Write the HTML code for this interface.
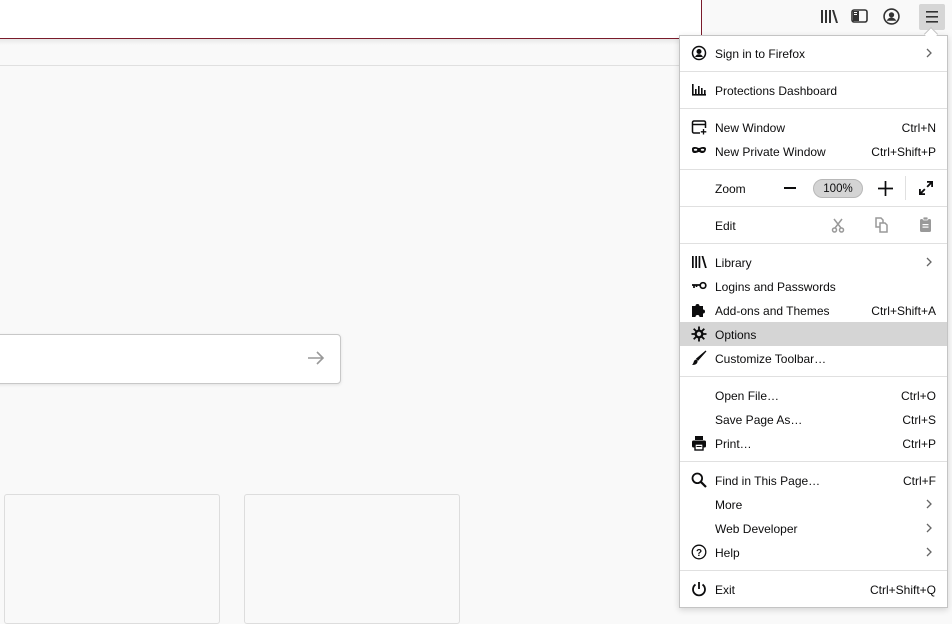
<!DOCTYPE html>
<html><head><meta charset="utf-8"><style>
*{margin:0;padding:0;box-sizing:border-box}
body{width:952px;height:612px;overflow:hidden;background:#f9f9f9;position:relative;font-family:"Liberation Sans",sans-serif;font-size:12px;color:#0c0c0d}
.abs{position:absolute}
.row{position:absolute;left:680px;width:267px;height:24px;line-height:24px}
.row .t{position:absolute;left:35px;top:1px}
.row .k{position:absolute;right:11px;top:1px}
.row .ic{position:absolute;left:11px;top:4px;width:16px;height:16px}
.row .ch{position:absolute;right:13px;top:7px;width:10px;height:10px}
.sep{position:absolute;left:680px;width:267px;height:1px;background:#e0e0e0}
</style></head><body>
<div class="abs" style="left:0;top:0;width:702px;height:39px;background:#fff;border-right:1px solid #7a1b2b;border-bottom:1px solid #7a1b2b"></div>
<div class="abs" style="left:702px;top:0;width:250px;height:39px;background:#f9f9f9"></div>
<div class="abs" style="left:0;top:39px;width:680px;height:6px;background:linear-gradient(#e8e8e8,#f9f9f9)"></div>
<div class="abs" style="left:0;top:65px;width:680px;height:1px;background:#e0e0e0"></div>
<svg class="abs" style="left:820px;top:9px" width="18" height="16" viewBox="0 0 18 16"><g fill="#333"><rect x="1" y="1" width="2" height="13"/><rect x="5" y="1" width="2" height="13"/><rect x="9" y="1" width="2" height="13"/><path d="M12 1h2l4 13h-2z"/></g></svg>
<svg class="abs" style="left:851px;top:9px" width="17" height="15" viewBox="0 0 17 15"><rect x="1" y="1" width="15" height="12" rx="2" fill="none" stroke="#333" stroke-width="1.6"/><rect x="2" y="2" width="6" height="10" fill="#333"/><rect x="3" y="3" width="3" height="1" fill="#fff"/><rect x="3" y="5" width="3" height="1" fill="#fff"/></svg>
<svg class="abs" style="left:883px;top:8px" width="17" height="17" viewBox="0 0 16 16"><circle cx="8" cy="8" r="7" fill="none" stroke="#333" stroke-width="1.5"/><circle cx="8" cy="6.5" r="2.5" fill="#333"/><path d="M3.5 12c1-2 2.5-3 4.5-3s3.5 1 4.5 3z" fill="#333"/></svg>
<div class="abs" style="left:919px;top:4px;width:26px;height:26px;background:#d6d6d6;border-radius:2px"></div>
<svg class="abs" style="left:925px;top:10px" width="14" height="14" viewBox="0 0 14 14"><g fill="#333"><rect x="1" y="1" width="12" height="1.6"/><rect x="1" y="6" width="12" height="1.6"/><rect x="1" y="11" width="12" height="1.6"/></g></svg>
<div class="abs" style="left:-6px;top:334px;width:347px;height:50px;background:#fff;border:1px solid #c8c8c8;border-radius:4px;box-shadow:0 1px 3px rgba(0,0,0,.1)"></div>
<svg class="abs" style="left:307px;top:350px" width="18" height="16" viewBox="0 0 18 16"><path d="M1 8h15M10 2l6 6-6 6" fill="none" stroke="#999" stroke-width="1.6"/></svg>
<div class="abs" style="left:4px;top:494px;width:216px;height:130px;border:1px solid #ddd;border-radius:3px"></div>
<div class="abs" style="left:244px;top:494px;width:216px;height:130px;border:1px solid #ddd;border-radius:3px"></div>
<div class="abs" style="left:679px;top:35px;width:269px;height:573px;background:#fff;border:1px solid #c4c4c4;box-shadow:0 2px 6px rgba(0,0,0,.15)"></div>
<div class="abs" style="left:926px;top:29px;width:10px;height:10px;background:#fff;border-left:1px solid #c4c4c4;border-top:1px solid #c4c4c4;transform:rotate(45deg)"></div>

<div class="row" style="top:41px"><svg class="ic" viewBox="0 0 16 16"><circle cx="8" cy="8" r="6.5" fill="none" stroke="#0c0c0d" stroke-width="1.5"/><circle cx="8" cy="6.5" r="2.5" fill="#0c0c0d"/><path d="M4 12c1-2 2.3-2.8 4-2.8s3 .8 4 2.8z" fill="#0c0c0d"/></svg><span class="t">Sign in to Firefox</span><svg class="ch" viewBox="0 0 10 10"><path d="M3 1l4 4-4 4" fill="none" stroke="#666" stroke-width="1.3"/></svg></div>
<div class="sep" style="top:71px"></div>
<div class="row" style="top:78px"><svg class="ic" viewBox="0 0 16 16"><g fill="#0c0c0d"><rect x="1" y="2" width="1.6" height="11"/><rect x="1" y="12" width="14" height="1.6"/><rect x="4" y="7" width="1.6" height="5"/><rect x="7" y="4" width="1.6" height="8"/><rect x="10" y="6" width="1.6" height="6"/><rect x="13" y="8" width="1.6" height="4"/></g></svg><span class="t">Protections Dashboard</span></div>
<div class="sep" style="top:108px"></div>
<div class="row" style="top:115px"><svg class="ic" viewBox="0 0 16 16"><path d="M9 14H3a1.5 1.5 0 0 1-1.5-1.5v-9A1.5 1.5 0 0 1 3 2h10a1.5 1.5 0 0 1 1.5 1.5V9M1.5 5.5h13" fill="none" stroke="#0c0c0d" stroke-width="1.5"/><path d="M12.5 10v5.5M9.8 12.8h5.5" stroke="#0c0c0d" stroke-width="1.3"/></svg><span class="t">New Window</span><span class="k">Ctrl+N</span></div>
<div class="row" style="top:139px"><svg class="ic" viewBox="0 0 16 16"><path d="M1 6c0-1.5 1-2 3-2s3 1 4 1 2-1 4-1 3 .5 3 2-1 4-3.5 4S9 9 8 9s-2 1-4.5 1S1 7.5 1 6z" fill="#0c0c0d"/><ellipse cx="4.5" cy="6.8" rx="1.7" ry="1" fill="#fff"/><ellipse cx="11.5" cy="6.8" rx="1.7" ry="1" fill="#fff"/></svg><span class="t">New Private Window</span><span class="k">Ctrl+Shift+P</span></div>
<div class="sep" style="top:169px"></div>
<div class="row" style="top:176px"><span class="t">Zoom</span></div>
<div class="abs" style="left:784px;top:187px;width:12px;height:1.6px;background:#0c0c0d"></div>
<div class="abs" style="left:813px;top:179px;width:50px;height:19px;background:#d4d4d4;border:1px solid #b8b8b8;border-radius:10px;text-align:center;line-height:18px;font-size:11.5px">100%</div>
<svg class="abs" style="left:878px;top:181px" width="15" height="15" viewBox="0 0 15 15"><path d="M7.5 0v15M0 7.5h15" stroke="#0c0c0d" stroke-width="1.7"/></svg>
<div class="abs" style="left:905px;top:176px;width:1px;height:24px;background:#e0e0e0"></div>
<svg class="abs" style="left:918px;top:180px" width="16" height="16" viewBox="0 0 16 16"><path d="M9 1h6v6h-1.8V4.1L9.8 7.5 8.5 6.2l3.4-3.4H9zM7 15H1V9h1.8v2.9l3.4-3.4 1.3 1.3-3.4 3.4H7z" fill="#0c0c0d"/></svg>
<div class="sep" style="top:206px"></div>
<div class="row" style="top:213px"><span class="t">Edit</span></div>
<svg class="abs" style="left:831px;top:218px" width="14" height="15" viewBox="0 0 14 15"><path d="M3 1l7 9M11 1L4 10" stroke="#999" stroke-width="1.5"/><circle cx="3.5" cy="12" r="2" fill="none" stroke="#999" stroke-width="1.5"/><circle cx="10.5" cy="12" r="2" fill="none" stroke="#999" stroke-width="1.5"/></svg>
<svg class="abs" style="left:874px;top:217px" width="15" height="16" viewBox="0 0 15 16"><path d="M2 1h5l2 2v7H2z" fill="none" stroke="#999" stroke-width="1.5"/><path d="M6 6h5l2 2v7H6z" fill="#fff" stroke="#999" stroke-width="1.5"/></svg>
<svg class="abs" style="left:919px;top:216px" width="13" height="17" viewBox="0 0 13 17"><rect x="1" y="3" width="11" height="13" rx="1.5" fill="#999"/><rect x="4" y="1" width="5" height="3" rx="1" fill="#999" stroke="#fff" stroke-width=".8"/><rect x="3.5" y="8" width="6" height="1.2" fill="#fff"/><rect x="3.5" y="10.5" width="6" height="1.2" fill="#fff"/></svg>
<div class="sep" style="top:243px"></div>
<div class="row" style="top:250px"><svg class="ic" viewBox="0 0 16 16"><g fill="#0c0c0d"><rect x="1" y="2" width="1.7" height="12"/><rect x="4.3" y="2" width="1.7" height="12"/><rect x="7.6" y="2" width="1.7" height="12"/><path d="M10.5 2h1.8l3.5 12H14z"/></g></svg><span class="t">Library</span><svg class="ch" viewBox="0 0 10 10"><path d="M3 1l4 4-4 4" fill="none" stroke="#666" stroke-width="1.3"/></svg></div>
<div class="row" style="top:274px"><svg class="ic" viewBox="0 0 16 16"><path d="M1 7h8M3 7v3M5.5 7v2" stroke="#0c0c0d" stroke-width="1.7"/><circle cx="12" cy="7.5" r="2.8" fill="none" stroke="#0c0c0d" stroke-width="1.7"/></svg><span class="t">Logins and Passwords</span></div>
<div class="row" style="top:298px"><svg class="ic" viewBox="0 0 16 16"><path d="M1 5h3.5a2 2 0 1 1 4 0H12v3.5a2 2 0 1 1 0 4V16H8.5a2 2 0 1 0-4 0H1z" fill="#0c0c0d" transform="translate(0,-1)"/></svg><span class="t">Add-ons and Themes</span><span class="k">Ctrl+Shift+A</span></div>
<div class="row" style="top:322px;background:#d5d5d5;left:680px"><svg class="ic" viewBox="0 0 16 16"><g stroke="#0c0c0d" stroke-width="1.8"><path d="M8 0.5v15M0.5 8h15M2.7 2.7l10.6 10.6M13.3 2.7L2.7 13.3"/></g><circle cx="8" cy="8" r="4.5" fill="#0c0c0d"/><circle cx="8" cy="8" r="2.2" fill="#d5d5d5"/></svg><span class="t">Options</span></div>
<div class="row" style="top:346px"><svg class="ic" viewBox="0 0 16 16"><path d="M15 1L7 10l-1.2-1.2z" fill="#0c0c0d" stroke="#0c0c0d" stroke-width="1.2"/><path d="M5.5 9.5c-2 0-2.5 1.5-3 3S1 15 1 15s3 .3 4.5-1.2 1-3 1-3z" fill="#0c0c0d"/></svg><span class="t">Customize Toolbar…</span></div>
<div class="sep" style="top:376px"></div>
<div class="row" style="top:383px"><span class="t">Open File…</span><span class="k">Ctrl+O</span></div>
<div class="row" style="top:407px"><span class="t">Save Page As…</span><span class="k">Ctrl+S</span></div>
<div class="row" style="top:431px"><svg class="ic" viewBox="0 0 16 16"><rect x="4" y="1" width="8" height="4" fill="#0c0c0d"/><rect x="1" y="5.5" width="14" height="7" rx="1.5" fill="#0c0c0d"/><rect x="4" y="9" width="8" height="6" fill="#fff" stroke="#0c0c0d" stroke-width="1.4"/><rect x="5.5" y="11" width="5" height="1" fill="#0c0c0d"/></svg><span class="t">Print…</span><span class="k">Ctrl+P</span></div>
<div class="sep" style="top:461px"></div>
<div class="row" style="top:468px"><svg class="ic" viewBox="0 0 16 16"><circle cx="6.3" cy="6.3" r="4.8" fill="none" stroke="#0c0c0d" stroke-width="1.8"/><path d="M9.8 9.8L15 15" stroke="#0c0c0d" stroke-width="2.2"/></svg><span class="t">Find in This Page…</span><span class="k">Ctrl+F</span></div>
<div class="row" style="top:492px"><span class="t">More</span><svg class="ch" viewBox="0 0 10 10"><path d="M3 1l4 4-4 4" fill="none" stroke="#666" stroke-width="1.3"/></svg></div>
<div class="row" style="top:516px"><span class="t">Web Developer</span><svg class="ch" viewBox="0 0 10 10"><path d="M3 1l4 4-4 4" fill="none" stroke="#666" stroke-width="1.3"/></svg></div>
<div class="row" style="top:540px"><svg class="ic" viewBox="0 0 16 16"><circle cx="8" cy="8" r="6.8" fill="none" stroke="#0c0c0d" stroke-width="1.3"/><text x="8" y="12" text-anchor="middle" font-size="10" font-family="Liberation Sans" font-weight="bold" fill="#0c0c0d">?</text></svg><span class="t">Help</span><svg class="ch" viewBox="0 0 10 10"><path d="M3 1l4 4-4 4" fill="none" stroke="#666" stroke-width="1.3"/></svg></div>
<div class="sep" style="top:570px"></div>
<div class="row" style="top:577px"><svg class="ic" viewBox="0 0 16 16"><path d="M4.5 3.5a6 6 0 1 0 7 0" fill="none" stroke="#0c0c0d" stroke-width="1.8"/><path d="M8 1v7" stroke="#0c0c0d" stroke-width="1.8"/></svg><span class="t">Exit</span><span class="k">Ctrl+Shift+Q</span></div>
</body></html>
